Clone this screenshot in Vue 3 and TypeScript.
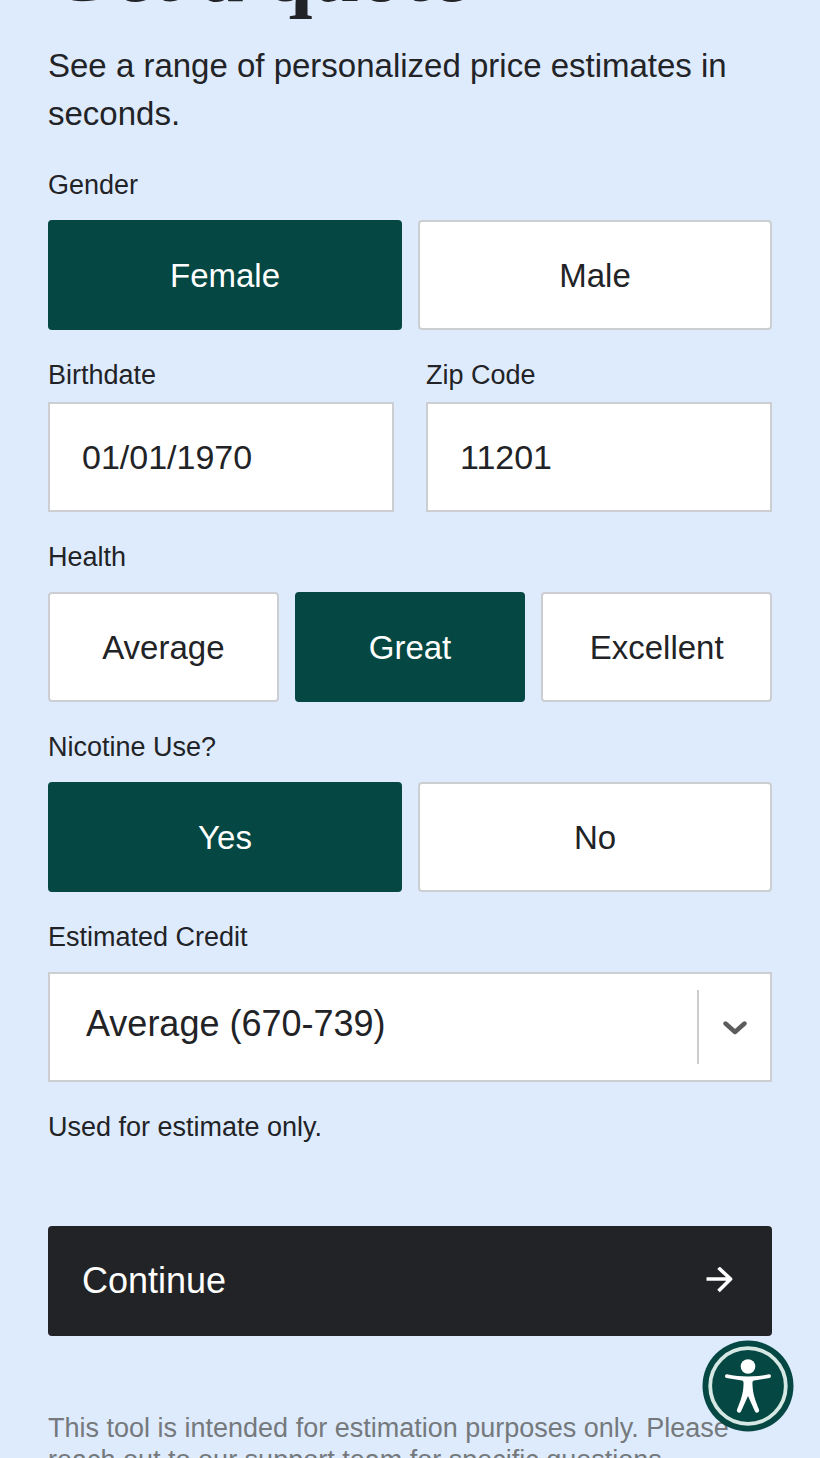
<script setup lang="ts">
import { reactive } from 'vue'

interface Choice {
  name: 'gender' | 'health' | 'nicotine'
  label: string
  options: string[]
}

const gender: Choice = { name: 'gender', label: 'Gender', options: ['Female', 'Male'] }
const habits: Choice[] = [
  { name: 'health', label: 'Health', options: ['Average', 'Great', 'Excellent'] },
  { name: 'nicotine', label: 'Nicotine Use?', options: ['Yes', 'No'] },
]

const form = reactive({
  gender: 'Female',
  birthdate: '01/01/1970',
  zip: '11201',
  health: 'Great',
  nicotine: 'Yes',
  credit: 'Average (670-739)',
})
</script>

<template>
  <main class="page">
    <h1 class="title">Get a quote</h1>
    <p class="intro">See a range of personalized price estimates in seconds.</p>

    <form class="form" @submit.prevent>
      <fieldset class="group">
        <legend class="label">{{ gender.label }}</legend>
        <div class="choices">
          <label v-for="option in gender.options" :key="option" class="choice">
            <input v-model="form.gender" class="radio" type="radio" name="gender" :value="option" />
            <span class="tile">{{ option }}</span>
          </label>
        </div>
      </fieldset>

      <div class="pair">
        <div class="field">
          <label class="label" for="birthdate">Birthdate</label>
          <input id="birthdate" v-model="form.birthdate" class="input" type="text" />
        </div>
        <div class="field">
          <label class="label" for="zip">Zip Code</label>
          <input id="zip" v-model="form.zip" class="input" type="text" inputmode="numeric" />
        </div>
      </div>

      <fieldset v-for="item in habits" :key="item.name" class="group">
        <legend class="label">{{ item.label }}</legend>
        <div class="choices">
          <label v-for="option in item.options" :key="option" class="choice">
            <input v-model="form[item.name]" class="radio" type="radio" :name="item.name" :value="option" />
            <span class="tile">{{ option }}</span>
          </label>
        </div>
      </fieldset>

      <div class="group">
        <label class="label" for="credit">Estimated Credit</label>
        <div class="select-box">
          <select id="credit" v-model="form.credit" class="select">
            <option>Average (670-739)</option>
          </select>
          <span class="indicator" aria-hidden="true">
            <svg width="24" height="16" viewBox="0 0 24 16" fill="none">
              <path d="M2.5 4.5 L12 13 L21.5 4.5" stroke="#5c5c5c" stroke-width="4.4" stroke-linecap="round" stroke-linejoin="round" />
            </svg>
          </span>
        </div>
      </div>

      <p class="hint">Used for estimate only.</p>

      <button class="submit" type="submit">
        <span>Continue</span>
        <svg width="28" height="28" viewBox="0 0 28 28" fill="none" aria-hidden="true">
          <path d="M0.5 12 H25 M12.5 0.8 L24.6 12 L12.5 24" stroke="#fff" stroke-width="3.6" stroke-linejoin="round" />
        </svg>
      </button>
    </form>

    <p class="disclaimer">
      This tool is intended for estimation purposes only. Please reach out to our support team for specific questions.
    </p>

    <button class="a11y" type="button" aria-label="Accessibility options">
      <svg width="92" height="92" viewBox="0 0 92 92" aria-hidden="true">
        <circle cx="46" cy="46" r="45.5" fill="#054742" />
        <circle cx="46" cy="46" r="37.8" fill="none" stroke="#d6e8e3" stroke-width="3.8" />
        <circle cx="46" cy="26.5" r="7.3" fill="#fff" />
        <path
          d="M25 34.2 C38 37.2 54 37.2 67 34.2 C69.5 34 69.5 37.5 67.5 38 L52 40.5 C50.5 41 50.3 42 50.5 45 C50.8 54 53.5 61 57 69.5 C58 72 54.5 74 53 71.5 L46 56 L39 71.5 C37.5 74 34 72 35 69.5 C38.5 61 41.2 54 41.5 45 C41.7 42 41.5 41 40 40.5 L24.5 38 C22.5 37.5 22.5 34 25 34.2 Z"
          fill="#fff"
        />
      </svg>
    </button>
  </main>
</template>

<style>
body {
  margin: 0;
  background: #deebfd;
}
</style>

<style scoped>
.page {
  box-sizing: border-box;
  height: 100vh;
  overflow: hidden;
  padding: 0 48px;
  background: #deebfd;
  color: #222326;
  font-family: "Liberation Sans", Arial, sans-serif;
  font-size: 33px;
}

.page * {
  box-sizing: border-box;
}

.title {
  margin: -76px 0 0;
  font-family: "Liberation Serif", "Times New Roman", serif;
  font-size: 85px;
  font-weight: 700;
  line-height: 96px;
}

.intro {
  margin: 22px 0 28px;
  line-height: 48px;
}

.form {
  display: flex;
  flex-direction: column;
  gap: 26px;
}

.group {
  min-width: 0;
  margin: 0;
  padding: 0;
  border: 0;
}

.label {
  display: block;
  padding: 0;
  margin-bottom: 16px;
  font-size: 27px;
  line-height: 38px;
}

.choices {
  display: flex;
  gap: 16px;
}

.choice {
  position: relative;
  flex: 1 1 0;
  cursor: pointer;
}

.radio {
  position: absolute;
  inset: 0;
  width: 100%;
  height: 100%;
  margin: 0;
  opacity: 0;
}

.tile {
  display: flex;
  align-items: center;
  justify-content: center;
  height: 110px;
  padding-top: 2px;
  border: 2px solid #ccced2;
  border-radius: 4px;
  background: #fff;
}

.radio:checked + .tile {
  border-color: #054742;
  background: #054742;
  color: #fff;
}

.pair {
  display: grid;
  grid-template-columns: 1fr 1fr;
  gap: 32px;
}

.field .label {
  margin-bottom: 8px;
}

.input,
.select {
  display: block;
  width: 100%;
  height: 110px;
  padding: 0 32px;
  border: 2px solid #ccced2;
  border-radius: 0;
  background: #fff;
  color: #222326;
  font: inherit;
  font-size: 34px;
}

.select-box {
  position: relative;
}

.select {
  appearance: none;
  padding: 0 80px 8px 36px;
  font-size: 36px;
}

.indicator {
  position: absolute;
  top: 18px;
  right: 2px;
  bottom: 18px;
  display: flex;
  align-items: center;
  justify-content: center;
  width: 73px;
  border-left: 2px solid #ccc;
  pointer-events: none;
}

.hint {
  margin: 0;
  font-size: 27px;
  line-height: 38px;
}

.submit {
  display: flex;
  align-items: center;
  justify-content: space-between;
  height: 110px;
  margin-top: 54px;
  padding: 0 38px 0 34px;
  border: 0;
  border-radius: 4px;
  background: #222326;
  color: #fff;
  font: inherit;
  font-size: 36px;
}

.disclaimer {
  margin: 76px 0 0;
  color: #75797c;
  font-size: 27px;
  line-height: 32px;
}

.a11y {
  position: fixed;
  right: 26px;
  bottom: 26px;
  width: 92px;
  height: 92px;
  padding: 0;
  border: 0;
  border-radius: 50%;
  background: none;
}

.a11y svg {
  display: block;
}
</style>
